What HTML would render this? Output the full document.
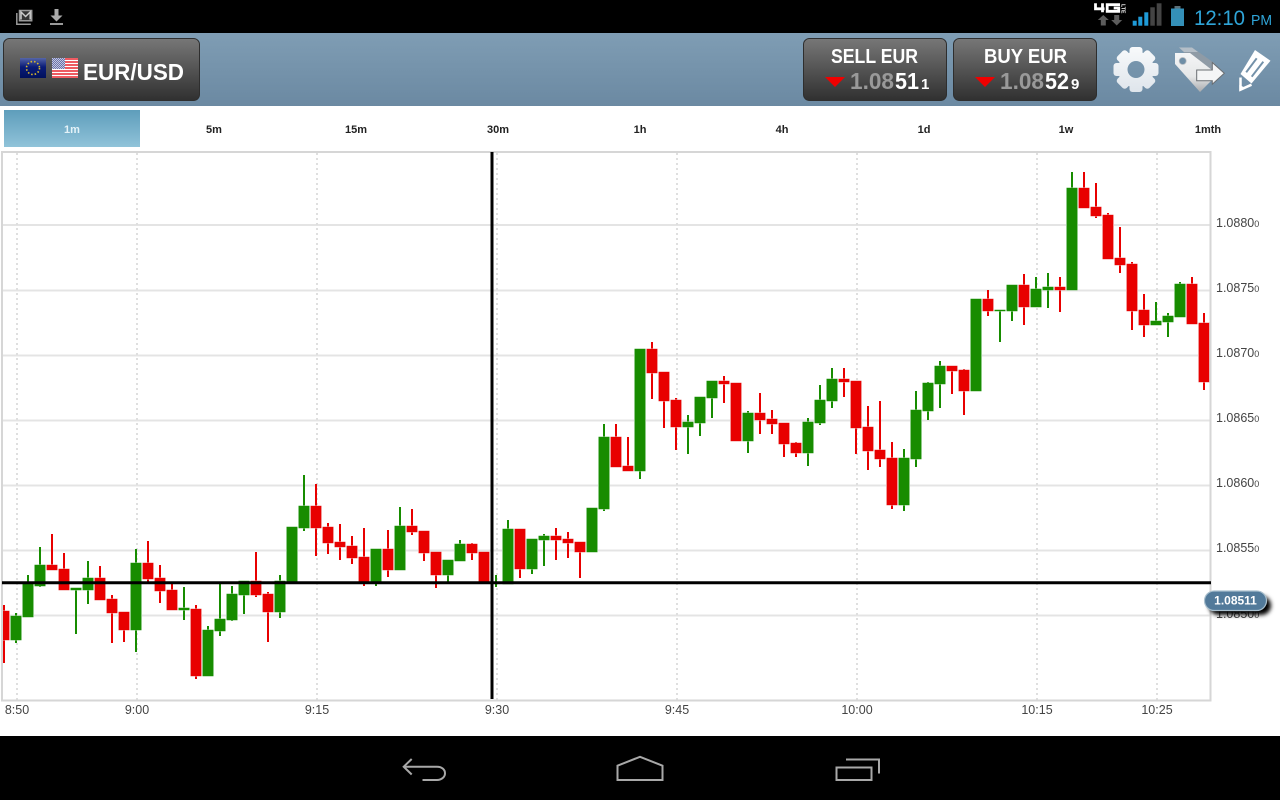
<!DOCTYPE html>
<html><head><meta charset="utf-8"><title>EUR/USD</title>
<style>html,body{margin:0;padding:0;background:#fff;width:1280px;height:800px;overflow:hidden}svg{display:block}text{font-family:"Liberation Sans",sans-serif}</style></head>
<body>
<svg width="1280" height="800" viewBox="0 0 1280 800" xmlns="http://www.w3.org/2000/svg" xmlns:xlink="http://www.w3.org/1999/xlink">
<defs>
<linearGradient id="bar" x1="0" y1="0" x2="0" y2="1"><stop offset="0" stop-color="#7f9db4"/><stop offset="1" stop-color="#6b89a2"/></linearGradient>
<linearGradient id="btn" x1="0" y1="0" x2="0" y2="1"><stop offset="0" stop-color="#777"/><stop offset="1" stop-color="#303030"/></linearGradient>
<linearGradient id="tab" x1="0" y1="0" x2="0" y2="1"><stop offset="0" stop-color="#5e9dbb"/><stop offset="1" stop-color="#90c3d9"/></linearGradient>
<linearGradient id="eu" x1="0" y1="0" x2="0" y2="1"><stop offset="0" stop-color="#5565a8"/><stop offset=".45" stop-color="#0a1c78"/><stop offset="1" stop-color="#00105c"/></linearGradient>
<linearGradient id="ic" x1="0" y1="0" x2="0" y2="1"><stop offset="0" stop-color="#fbfcfd"/><stop offset="1" stop-color="#dbe2e9"/></linearGradient>
<linearGradient id="tg" x1="0" y1="0" x2="0" y2="1"><stop offset="0" stop-color="#f4f5f6"/><stop offset=".6" stop-color="#e6e7e8"/><stop offset="1" stop-color="#a9abad"/></linearGradient>
<pattern id="chk" width="2" height="2" patternUnits="userSpaceOnUse"><rect width="2" height="2" fill="#6a72ac"/><rect width="1" height="1" fill="#c4c8de"/><rect x="1" y="1" width="1" height="1" fill="#c4c8de"/></pattern>
<clipPath id="cl"><rect x="2" y="152" width="1207.5" height="548"/></clipPath>
<filter id="bl" x="-30%" y="-60%" width="160%" height="220%"><feGaussianBlur stdDeviation="2"/></filter>
<mask id="gm" maskUnits="userSpaceOnUse" x="1108" y="42" width="56" height="56">
<g fill="#fff">
<circle cx="1136" cy="69.500" r="18"/>
<rect x="1129.500" y="47" width="13" height="45" rx="3"/>
<rect x="1129.500" y="47" width="13" height="45" rx="3" transform="rotate(45 1136 69.500)"/>
<rect x="1129.500" y="47" width="13" height="45" rx="3" transform="rotate(90 1136 69.500)"/>
<rect x="1129.500" y="47" width="13" height="45" rx="3" transform="rotate(135 1136 69.500)"/>
</g>
<circle cx="1136" cy="69.500" r="8.500" fill="#000"/>
</mask>
<path id="gb" d="M11 616h10V640h-10zM23 584h10V617h-10zM35 565h10V586h-10zM71 588h10V590h-10zM83 578h10V590h-10zM131 563h10V630h-10zM179 608h10V610h-10zM203 630h10V676h-10zM215 619h10V631h-10zM227 594h10V620h-10zM239 581h10V595h-10zM275 581h10V612h-10zM287 527h10V583h-10zM299 506h10V528h-10zM371 549h10V583h-10zM395 526h10V570h-10zM443 560h10V575h-10zM455 544h10V561h-10zM491 582.500h10V583.500h-10zM503 529h10V584h-10zM527 539h10V569h-10zM539 536h10V540h-10zM587 508h10V552h-10zM599 437h10V509h-10zM635 349h10V471h-10zM683 422h10V427h-10zM695 397h10V423h-10zM707 381h10V398h-10zM743 413h10V441h-10zM803 422h10V453h-10zM815 400h10V423h-10zM827 379h10V401h-10zM899 458h10V505h-10zM911 410h10V459h-10zM923 383h10V411h-10zM935 366h10V384h-10zM971 299h10V391h-10zM995 310h10V311h-10zM1007 285h10V311h-10zM1031 289h10V307h-10zM1043 287h10V290h-10zM1067 188h10V290h-10zM1151 321h10V325h-10zM1163 316h10V322h-10zM1175 284h10V317h-10z"/>
<path id="rb" d="M-1 611h10V640h-10zM47 565h10V570h-10zM59 569h10V590h-10zM95 578h10V600h-10zM107 599h10V613h-10zM119 612h10V630h-10zM143 563h10V579h-10zM155 578h10V591h-10zM167 590h10V610h-10zM191 609h10V676h-10zM251 581h10V595h-10zM263 594h10V612h-10zM311 506h10V528h-10zM323 527h10V543h-10zM335 542h10V547h-10zM347 546h10V558h-10zM359 557h10V583h-10zM383 549h10V570h-10zM407 526h10V532h-10zM419 531h10V553h-10zM431 552h10V575h-10zM467 544h10V553h-10zM479 552h10V583h-10zM515 529h10V569h-10zM551 536h10V540h-10zM563 539h10V543h-10zM575 542h10V552h-10zM611 437h10V467h-10zM623 466h10V471h-10zM647 349h10V373h-10zM659 372h10V401h-10zM671 400h10V427h-10zM719 381h10V384h-10zM731 383h10V441h-10zM755 413h10V420h-10zM767 419h10V424h-10zM779 423h10V444h-10zM791 443h10V453h-10zM839 379h10V382h-10zM851 381h10V428h-10zM863 427h10V451h-10zM875 450h10V459h-10zM887 458h10V505h-10zM947 366h10V371h-10zM959 370h10V391h-10zM983 299h10V311h-10zM1019 285h10V307h-10zM1055 287h10V290h-10zM1079 188h10V208h-10zM1091 207h10V216h-10zM1103 215h10V259h-10zM1115 258h10V265h-10zM1127 264h10V311h-10zM1139 310h10V325h-10zM1187 284h10V324h-10zM1199 323h10V382h-10z"/>
</defs>

<rect width="1280" height="33" fill="#000"/>
<rect y="33" width="1280" height="73" fill="url(#bar)"/>
<rect y="736" width="1280" height="64" fill="#000"/>

<!-- status left -->
<g fill="none" stroke="#9a9a9a" stroke-width="1.5">
<path d="M16.800 13v11.200h14"/>
<path d="M19.500 10.500h12.200v10.200H19.500z" fill="#333"/>
<path d="M21 19.500v-7.500l4.600 4.500 4.600-4.500v7.500" stroke="#ccc"/>
</g>
<path d="M54.500 9h4v6.500h4l-6 6-6-6h4z" fill="#aaa"/>
<rect x="50" y="23" width="13" height="2" fill="#999"/>

<!-- status right -->
<path d="M1095.500 3.300v5.500h9M1102.500 3.300v9" fill="none" stroke="#fff" stroke-width="2.800"/>
<path d="M1120 4.700h-12.800v6.600h11.500V8h-5" fill="none" stroke="#fff" stroke-width="2.800"/>
<text transform="translate(1121 4) rotate(90)" font-size="5.500" font-weight="700" fill="#fff" textLength="9.500" lengthAdjust="spacingAndGlyphs" y="-0.500">LTE</text>
<path d="M1103.300 15l5.500 5h-3v5.500h-5V20h-3zM1116.700 25.500l5.500-5.500h-3v-5h-5v5h-3z" fill="#5c5c5c"/>
<rect x="1132.700" y="20.700" width="4" height="5" fill="#1f9bd8"/>
<rect x="1138.300" y="16.700" width="4" height="9" fill="#1f9bd8"/>
<rect x="1144.300" y="12.300" width="4" height="13.400" fill="#1f9bd8"/>
<rect x="1150.300" y="7.300" width="4.500" height="18.400" fill="#444"/>
<rect x="1156.700" y="3.300" width="4.800" height="22.400" fill="#444"/>
<rect x="1174.500" y="6" width="6" height="3" fill="#5b6f78"/>
<rect x="1171" y="8.500" width="13" height="17.500" fill="#3490b8"/>
<text x="1194" y="25" font-size="21" fill="#2fa5d8" textLength="51" lengthAdjust="spacingAndGlyphs">12:10</text>
<text x="1251" y="25" font-size="15" fill="#2fa5d8" textLength="21" lengthAdjust="spacingAndGlyphs">PM</text>

<!-- pair button -->
<rect x="3.500" y="38.500" width="196" height="62" rx="6" fill="url(#btn)" stroke="#2e2e2e"/>
<rect x="20" y="58" width="26" height="20" fill="url(#eu)"/>
<circle cx="33" cy="68" r="6.500" fill="none" stroke="#d9b92c" stroke-width="1.600" stroke-dasharray="1.500 2"/>
<rect x="52" y="58" width="26" height="20" fill="#fff"/>
<path d="M52 59h26M52 62h26M52 65h26M52 68h26M52 71h26M52 74h26M52 77h26" stroke="#e8252f" stroke-width="1.500"/>
<rect x="52" y="58" width="13" height="11" fill="url(#chk)"/>
<text x="83" y="80" font-size="23" font-weight="700" fill="#fff" textLength="101" lengthAdjust="spacingAndGlyphs">EUR/USD</text>

<!-- sell -->
<rect x="803.500" y="38.500" width="143" height="62" rx="6" fill="url(#btn)" stroke="#2e2e2e"/>
<text x="831" y="63" font-size="20" font-weight="700" fill="#fff" textLength="87" lengthAdjust="spacingAndGlyphs">SELL EUR</text>
<path d="M825 77h20l-10 10z" fill="#f00000"/>
<text x="850" y="89" font-size="23" font-weight="700" fill="#999" textLength="44" lengthAdjust="spacingAndGlyphs">1.08</text>
<text x="895" y="89" font-size="23" font-weight="700" fill="#fff" textLength="24" lengthAdjust="spacingAndGlyphs">51</text>
<text x="921" y="89" font-size="15" font-weight="700" fill="#fff">1</text>

<!-- buy -->
<rect x="953.500" y="38.500" width="143" height="62" rx="6" fill="url(#btn)" stroke="#2e2e2e"/>
<text x="984" y="63" font-size="20" font-weight="700" fill="#fff" textLength="83" lengthAdjust="spacingAndGlyphs">BUY EUR</text>
<path d="M975 77h20l-10 10z" fill="#f00000"/>
<text x="1000" y="89" font-size="23" font-weight="700" fill="#999" textLength="44" lengthAdjust="spacingAndGlyphs">1.08</text>
<text x="1045" y="89" font-size="23" font-weight="700" fill="#fff" textLength="24" lengthAdjust="spacingAndGlyphs">52</text>
<text x="1071" y="89" font-size="15" font-weight="700" fill="#fff">9</text>

<!-- gear -->
<rect x="1108" y="42" width="56" height="56" fill="url(#ic)" mask="url(#gm)"/>

<!-- tag -->
<path d="M1179 47.500h13l23 16v8l-8 4z" fill="#8f9ba6"/>
<path d="M1179 47.500h13l6 4.500h-14z" fill="#b4bec7"/>
<path d="M1175 53h15l22 17v10l-12 12-25-28z" fill="url(#tg)"/>
<circle cx="1182.700" cy="61" r="3.500" fill="#6f8ea6" stroke="#b8bcc0" stroke-width=".8"/>
<path d="M1196.700 70h15.600v-7.500l12 10.800-12 11V80.700h-15.600z" fill="#f4f5f6" stroke="#6a6e72" stroke-width="1"/>

<!-- pencil -->
<path d="M1255 50l15.500 10.800-19 22.700-11-9.500z" fill="#fff"/>
<path d="M1256.700 58.300l-10.500 14M1263.300 61.700l-11.600 15" stroke="#7391a9" stroke-width="2" fill="none"/>
<path d="M1240.500 77.500v12.200l11-5" fill="none" stroke="#fff" stroke-width="2.500"/>
<path d="M1239.300 91v-6l6.500 3z" fill="#fff"/>

<!-- tabs -->
<rect x="4" y="110" width="136" height="37" fill="url(#tab)"/>
<g font-size="11" font-weight="700" text-anchor="middle" fill="#222">
<text x="72" y="133" fill="#e4f2f8">1m</text>
<text x="214" y="133">5m</text>
<text x="356" y="133">15m</text>
<text x="498" y="133">30m</text>
<text x="640" y="133">1h</text>
<text x="782" y="133">4h</text>
<text x="924" y="133">1d</text>
<text x="1066" y="133">1w</text>
<text x="1208" y="133">1mth</text>
</g>

<!-- grid -->
<path d="M3 225H1210M3 290.500H1210M3 355.500H1210M3 420.500H1210M3 485.500H1210M3 550.500H1210M3 615.500H1210" stroke="#e4e4e4" stroke-width="2" fill="none"/>
<path d="M17 153V700M137 153V700M317 153V700M497 153V700M677 153V700M857 153V700M1037 153V700M1157 153V700" stroke="#dfdfdf" stroke-width="2" stroke-dasharray="2 3" fill="none"/>

<g clip-path="url(#cl)">
<!-- green wicks -->
<path stroke="#178c00" stroke-width="2" fill="none" d="M16 613V643M28 575V617M40 547V587M76 588V634M88 561V604M136 549V652M184 587V620M208 626V676M220 583V636M232 586V621M244 581V614M280 575V618M292 527V583M304 475V531M376 549V586M400 507V570M448 560V583M460 540V561M496 575V587M508 520V584M532 539V574M544 534V566M592 508V552M604 424V511M640 349V479M688 415V454M700 397V436M712 381V418M748 411V453M808 418V466M820 385V425M832 368V408M904 449V511M916 391V467M928 382V420M940 361V408M976 299V391M1000 310V342M1012 285V321M1036 277V307M1048 273V308M1072 172V290M1156 302V325M1168 313V337M1180 282V317"/>
<!-- red wicks -->
<path stroke="#e80000" stroke-width="2" fill="none" d="M4 605V663M52 534V570M64 553V590M100 566V600M112 595V643M124 612V642M148 541V582M160 565V603M172 583V610M196 605V679M256 552V597M268 592V642M316 484V556M328 523V554M340 524V560M352 536V564M364 528V586M388 530V577M412 509V535M424 531V561M436 552V588M472 543V560M484 552V583M520 529V578M556 528V560M568 532V558M580 542V578M616 424V467M628 437V471M652 342V399M664 372V428M676 398V450M724 376V403M736 383V441M760 393V434M772 410V434M784 423V457M796 442V457M844 368V397M856 381V454M868 406V470M880 401V467M892 442V509M952 366V394M964 369V415M988 290V316M1024 274V325M1060 277V312M1084 172V208M1096 183V218M1108 213V259M1120 227V273M1132 262V330M1144 294V337M1192 277V324M1204 313V390"/>
<!-- body halos -->
<g fill="#8fca87"><use xlink:href="#gb" href="#gb" x="-1"/><use xlink:href="#gb" href="#gb" x="1"/></g>
<g fill="#f19a9a"><use xlink:href="#rb" href="#rb" x="-1"/><use xlink:href="#rb" href="#rb" x="1"/></g>
<!-- bodies -->
<use xlink:href="#gb" href="#gb" fill="#178c00" stroke="#8fca87" stroke-width="1" paint-order="stroke"/>
<use xlink:href="#rb" href="#rb" fill="#e80000" stroke="#f19a9a" stroke-width="1" paint-order="stroke"/>
</g>

<!-- chart frame -->
<rect x="2" y="152" width="1208.500" height="548.500" fill="none" stroke="#d6d6d6" stroke-width="2"/>

<!-- crosshair -->
<path d="M2 582.700H1211" stroke="#000" stroke-width="3"/>
<path d="M492 152V699" stroke="#000" stroke-width="3"/>

<!-- y axis -->
<g font-size="12.500" fill="#444">
<text x="1216" y="227">1.0880<tspan font-size="9">0</tspan></text>
<text x="1216" y="292">1.0875<tspan font-size="9">0</tspan></text>
<text x="1216" y="357">1.0870<tspan font-size="9">0</tspan></text>
<text x="1216" y="422">1.0865<tspan font-size="9">0</tspan></text>
<text x="1216" y="487">1.0860<tspan font-size="9">0</tspan></text>
<text x="1216" y="552">1.0855<tspan font-size="9">0</tspan></text>
<text x="1216" y="618">1.0850<tspan font-size="9">0</tspan></text>
</g>

<!-- pill -->
<rect x="1209" y="596" width="62" height="19" rx="9.500" fill="#000" filter="url(#bl)"/>
<rect x="1204.500" y="591" width="62" height="19.500" rx="9.700" fill="#527a9a" stroke="#a9bfcd" stroke-width="1.200"/>
<text x="1235.500" y="604.500" font-size="12" font-weight="700" fill="#fff" text-anchor="middle">1.08511</text>

<!-- x axis -->
<g font-size="12.500" fill="#444" text-anchor="middle">
<text x="17" y="714">8:50</text>
<text x="137" y="714">9:00</text>
<text x="317" y="714">9:15</text>
<text x="497" y="714">9:30</text>
<text x="677" y="714">9:45</text>
<text x="857" y="714">10:00</text>
<text x="1037" y="714">10:15</text>
<text x="1157" y="714">10:25</text>
</g>

<!-- nav -->
<g fill="none" stroke="#a8a8a8" stroke-width="2">
<path d="M411.700 759l-8 7.700 8 7.800M403.500 766.700H437c5 0 8 3 8 6.500s-3 6.800-8 6.800h-14.500"/>
<path d="M617.500 780v-14.300L640 756.800l22.500 8.900V780z"/>
<path d="M836.500 767.500h35V780h-35z"/>
<path d="M846 759.500h33v14"/>
</g>
</svg>
</body></html>
